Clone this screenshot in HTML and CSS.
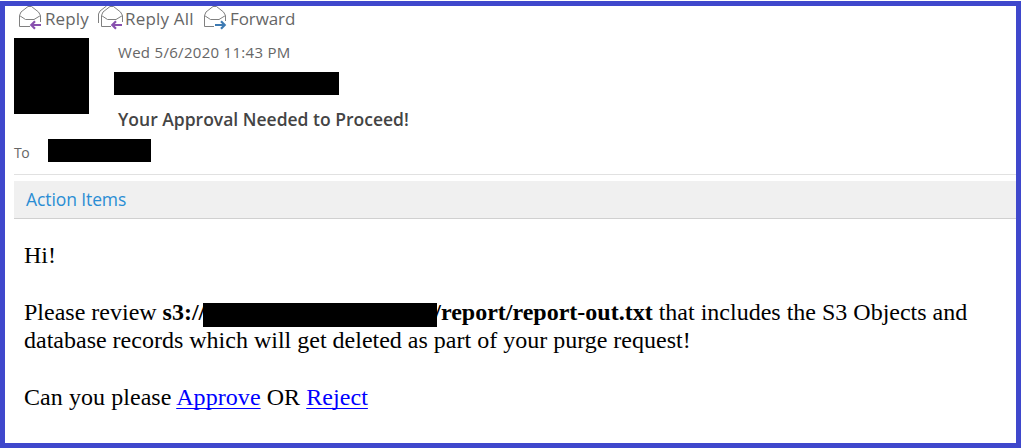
FILE: index.html
```html
<!DOCTYPE html>
<html lang="en">
<head>
<meta charset="utf-8">
<title>Your Approval Needed to Proceed!</title>
<link rel="stylesheet" href="styles.css">
</head>
<body>
<main class="message">
  <nav class="toolbar">
    <a class="command reply">
      <svg class="icon" width="24" height="24" viewBox="0 0 24 24"><path class="paper" d="M12 20.500H1.500V9.500L3 6L10 .5H13.500L20.500 6L22.500 9.500V16M1.500 9.500L7.500 13.500H16L22.500 9.500"/><path class="arrow purple" d="M23 19H13.500M17 15.300L13.300 19L17 22.700"/></svg>
      <span class="label reply-label">Reply</span>
    </a>
    <a class="command reply-all">
      <svg class="icon" width="26" height="24" viewBox="0 0 26 24"><path class="paper" d="M.5 17V8L2 5L8.500 0M13 20.500H3.500V9.500L5 6L12 .5H15.500L22.500 6L24.500 9.500V16M3.500 9.500L9.500 13.500H18L24.500 9.500"/><path class="arrow purple" d="M24 19H14.500M18 15.300L14.300 19L18 22.700"/></svg>
      <span class="label all-label">Reply All</span>
    </a>
    <a class="command forward">
      <svg class="icon" width="24" height="24" viewBox="0 0 24 24"><path class="paper" d="M11 20.500H1.500V9.500L3 6L10 .5H13.500L20.500 6L22.500 9.500V15M1.500 9.500L7.500 13.500H16L22.500 9.500"/><path class="arrow blue" d="M12 19H21.500M18 15.300L21.700 19L18 22.700"/></svg>
      <span class="label forward-label">Forward</span>
    </a>
  </nav>
  <header class="header">
    <div class="avatar"></div>
    <div class="details">
      <div class="date">Wed 5/6/2020 11:43 PM</div>
      <div class="sender"></div>
      <h1 class="subject">Your Approval Needed to Proceed!</h1>
    </div>
  </header>
  <div class="to-row"><span class="to">To</span><span class="recipient"></span></div>
  <div class="actions"><span class="actions-label">Action Items</span></div>
  <article class="body">
    <p class="para">Hi!</p>
    <p class="para review">Please review <b class="path">s3://<span class="bucket"></span><span class="report">/report/report-out.txt</span></b> that includes the S3 Objects and<br>database records which will get deleted as part of your purge request!</p>
    <p class="para question">Can you please <a class="link" href="#approve">Approve</a> OR <a class="link" href="#reject">Reject</a></p>
  </article>
</main>
</body>
</html>
```
FILE: styles.css
```css
* { box-sizing: border-box; }
body { margin: 0; background: #fff; }
.message {
  width: 1021px; height: 447px; margin-top: 1px;
  border: 5px solid #3f48cc; background: #fff; overflow: hidden;
  font-family: "Open Sans", "Noto Sans", sans-serif; color: #666;
}
.toolbar { display: flex; height: 32px; padding-left: 13px; }
.command { display: flex; align-items: flex-start; white-space: nowrap; }
.reply { width: 80px; }
.reply-all { width: 105px; }
.icon { flex: none; }
.paper { fill: none; stroke: #808080; stroke-width: 1; }
.arrow { fill: none; stroke-width: 2.2; }
.purple { stroke: #8850ae; }
.blue { stroke: #3d7ab3; }
.label { font-size: 17px; line-height: 26px; }
.reply-label { margin-left: 3px; letter-spacing: .1px; }
.all-label { margin-left: 1px; letter-spacing: .2px; }
.forward-label { margin-left: 3px; letter-spacing: -.1px; }
.header { display: flex; gap: 25px; height: 101px; padding-left: 9px; }
.avatar { width: 75px; height: 76px; background: #000; }
.date { height: 34px; padding-left: 4px; font-size: 15px; line-height: 28px; letter-spacing: .3px; white-space: nowrap; }
.sender { width: 225px; height: 23px; background: #000; }
.subject { margin: 10px 0 0 4px; font-size: 17.500px; line-height: 28px; font-weight: 600; color: #444; white-space: nowrap; }
.to-row { display: flex; height: 36px; margin-left: 9px; border-bottom: 1px solid #e1e1e1; }
.to { width: 34px; font-size: 14px; line-height: 27px; letter-spacing: -.4px; }
.recipient { width: 103px; height: 23px; background: #000; }
.actions { height: 38px; margin: 6px 0 0 9px; padding-left: 12px; background: #f0f0f0; border-bottom: 1px solid #d0d0d0; }
.actions-label { font-size: 17.500px; line-height: 37px; letter-spacing: -.1px; color: #2a8dd4; }
.body { padding: 22px 0 0 19px; font-family: "Liberation Serif", serif; font-size: 24px; line-height: 28px; color: #000; white-space: nowrap; }
.para { margin: 0 0 29px; }
.bucket { position: relative; display: inline-block; width: 234px; height: 24px; margin: 0 -3px -4px -2px; background: #000; vertical-align: -3px; }
.path { line-height: 1; }
.question { letter-spacing: .06px; }
.link { color: #00f; text-decoration: underline; text-decoration-thickness: 1px; text-underline-offset: 3px; text-decoration-skip-ink: none; }
```
